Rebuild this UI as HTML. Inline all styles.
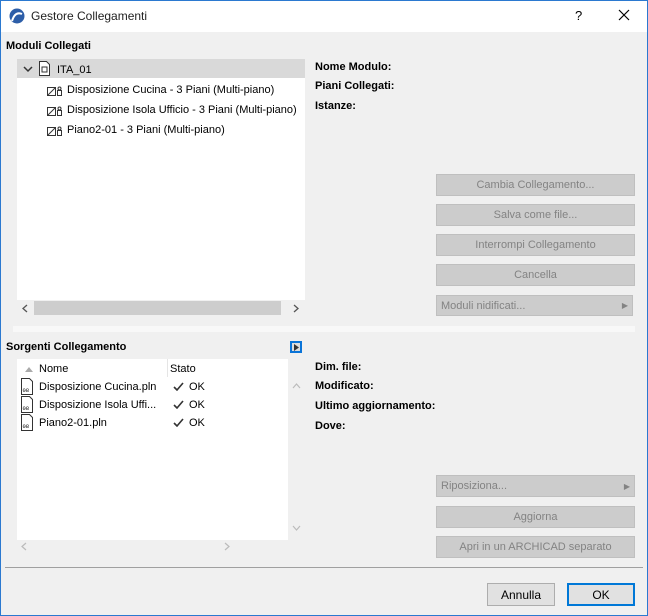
<!DOCTYPE html>
<html><head><meta charset="utf-8"><style>
*{box-sizing:border-box;margin:0;padding:0}
body{width:648px;height:616px;overflow:hidden;background:#f0f0f0;font-family:"Liberation Sans",sans-serif;font-size:11px;color:#000;position:relative}
.a{position:absolute;white-space:nowrap}
.b{font-weight:bold}
.btn{position:absolute;background:#cccccc;border:1px solid #bfbfbf;color:#838383;text-align:center;line-height:21px;height:22px;left:436px;width:199px}
.lbl{left:315px}
</style></head><body>
<div class="a" style="left:0;top:0;width:648px;height:32px;background:#fff"></div>
<div class="a" style="left:0;top:0;width:1px;height:616px;background:#2b79d0"></div>
<div class="a" style="right:0;top:0;width:1px;height:616px;background:#2b79d0"></div>
<div class="a" style="left:0;bottom:0;width:648px;height:1px;background:#2b79d0"></div>
<div class="a" style="left:0;top:0;width:648px;height:1px;background:#2b79d0"></div>
<svg class="a" style="left:9px;top:8px" width="16" height="16"><circle cx="8" cy="8" r="7.5" fill="#2d5ea8"/><path d="M3 13 Q6 3 13 6" stroke="#fff" stroke-width="2" fill="none"/></svg>
<div class="a" style="left:31px;top:9px;font-size:12px;color:#222">Gestore Collegamenti</div>
<div class="a" style="left:575px;top:8px;font-size:13px">?</div>
<svg class="a" style="left:618px;top:9px" width="12" height="12"><path d="M1 1L11 11M11 1L1 11" stroke="#000" stroke-width="1.2"/></svg>

<div class="a b" style="left:6px;top:40px">Moduli Collegati</div>
<div class="a" style="left:17px;top:59px;width:288px;height:257px;background:#fff"></div>
<div class="a" style="left:17px;top:59px;width:288px;height:19px;background:#d9d9d9"></div>
<svg class="a" style="left:23px;top:66px" width="10" height="7"><path d="M1 1L5 5L9 1" stroke="#333" stroke-width="1.5" fill="none"/></svg>
<svg class="a" style="left:38px;top:61px" width="13" height="15"><path d="M1.5 .5h7l3 3v11h-10z" fill="#fff" stroke="#333"/><rect x="4" y="6" width="5" height="5" fill="none" stroke="#333"/></svg>
<div class="a" style="left:57px;top:64px">ITA_01</div>
<svg class="a" style="left:47px;top:86px" width="15" height="10"><rect x=".5" y="1.5" width="8" height="8" fill="none" stroke="#333"/><path d="M1 9L8 2" stroke="#333"/><rect x="10.5" y="4.5" width="4" height="5" fill="none" stroke="#333"/><circle cx="12.5" cy="2.5" r="1.5" fill="none" stroke="#333"/></svg>
<svg class="a" style="left:47px;top:106px" width="15" height="10"><rect x=".5" y="1.5" width="8" height="8" fill="none" stroke="#333"/><path d="M1 9L8 2" stroke="#333"/><rect x="10.5" y="4.5" width="4" height="5" fill="none" stroke="#333"/><circle cx="12.5" cy="2.5" r="1.5" fill="none" stroke="#333"/></svg>
<svg class="a" style="left:47px;top:126px" width="15" height="10"><rect x=".5" y="1.5" width="8" height="8" fill="none" stroke="#333"/><path d="M1 9L8 2" stroke="#333"/><rect x="10.5" y="4.5" width="4" height="5" fill="none" stroke="#333"/><circle cx="12.5" cy="2.5" r="1.5" fill="none" stroke="#333"/></svg>
<div class="a" style="left:67px;top:84px">Disposizione Cucina - 3 Piani (Multi-piano)</div>
<div class="a" style="left:67px;top:104px;width:238px;overflow:hidden">Disposizione Isola Ufficio - 3 Piani (Multi-piano)</div>
<div class="a" style="left:67px;top:124px">Piano2-01 - 3 Piani (Multi-piano)</div>
<div class="a" style="left:17px;top:300px;width:288px;height:16px;background:#f0f0f0"></div>
<div class="a" style="left:34px;top:301px;width:247px;height:14px;background:#cdcdcd"></div>
<svg class="a" style="left:22px;top:304px" width="6" height="9"><path d="M5 1L1 4.5L5 8" stroke="#555" stroke-width="1.3" fill="none"/></svg>
<svg class="a" style="left:293px;top:304px" width="6" height="9"><path d="M1 1L5 4.5L1 8" stroke="#555" stroke-width="1.3" fill="none"/></svg>

<div class="a lbl b" style="top:61px">Nome Modulo:</div>
<div class="a lbl b" style="top:80px">Piani Collegati:</div>
<div class="a lbl b" style="top:100px">Istanze:</div>
<div class="btn" style="top:174px">Cambia Collegamento...</div>
<div class="btn" style="top:204px">Salva come file...</div>
<div class="btn" style="top:234px">Interrompi Collegamento</div>
<div class="btn" style="top:264px">Cancella</div>
<div class="btn" style="top:295px;height:21px;line-height:20px;width:197px;text-align:left;padding-left:4px">Moduli nidificati...<span style="position:absolute;right:4px;font-size:8px">▶</span></div>

<div class="a" style="left:13px;top:326px;width:622px;height:6px;background:#f8f8f8"></div>

<div class="a b" style="left:6px;top:341px">Sorgenti Collegamento</div>
<div class="a" style="left:290px;top:341px;width:12px;height:12px;border:2px solid #0a74d8;background:#ddd"></div>
<svg class="a" style="left:294px;top:344px" width="5" height="7"><path d="M0 0L5 3.5L0 7z" fill="#333"/></svg>
<div class="a" style="left:17px;top:359px;width:271px;height:181px;background:#fff"></div>
<div class="a" style="left:167px;top:359px;width:1px;height:18px;background:#e5e5e5"></div>
<svg class="a" style="left:25px;top:367px" width="8" height="5"><path d="M0 5L4 0L8 5z" fill="#aaa"/></svg>
<div class="a" style="left:39px;top:363px">Nome</div>
<div class="a" style="left:170px;top:363px">Stato</div>
<svg class="a" style="left:20px;top:378px" width="14" height="17"><path d="M1.5 .5h8l3 3v13h-11z" fill="#fff" stroke="#333"/><text x="2.5" y="14" font-size="5.5" font-family="Liberation Mono">08</text></svg>
<svg class="a" style="left:20px;top:396px" width="14" height="17"><path d="M1.5 .5h8l3 3v13h-11z" fill="#fff" stroke="#333"/><text x="2.5" y="14" font-size="5.5" font-family="Liberation Mono">08</text></svg>
<svg class="a" style="left:20px;top:414px" width="14" height="17"><path d="M1.5 .5h8l3 3v13h-11z" fill="#fff" stroke="#333"/><text x="2.5" y="14" font-size="5.5" font-family="Liberation Mono">08</text></svg>
<div class="a" style="left:39px;top:381px">Disposizione Cucina.pln</div>
<div class="a" style="left:39px;top:399px">Disposizione Isola Uffi...</div>
<div class="a" style="left:39px;top:417px">Piano2-01.pln</div>
<svg class="a" style="left:173px;top:382px" width="11" height="9"><path d="M1 5L4 8L10 1" stroke="#333" stroke-width="1.6" fill="none"/></svg>
<svg class="a" style="left:173px;top:400px" width="11" height="9"><path d="M1 5L4 8L10 1" stroke="#333" stroke-width="1.6" fill="none"/></svg>
<svg class="a" style="left:173px;top:418px" width="11" height="9"><path d="M1 5L4 8L10 1" stroke="#333" stroke-width="1.6" fill="none"/></svg>
<div class="a" style="left:189px;top:381px">OK</div>
<div class="a" style="left:189px;top:399px">OK</div>
<div class="a" style="left:189px;top:417px">OK</div>
<svg class="a" style="left:292px;top:383px" width="9" height="6"><path d="M1 5L4.5 1L8 5" stroke="#bbb" stroke-width="1.2" fill="none"/></svg>
<svg class="a" style="left:292px;top:525px" width="9" height="6"><path d="M1 1L4.5 5L8 1" stroke="#bbb" stroke-width="1.2" fill="none"/></svg>
<svg class="a" style="left:21px;top:542px" width="6" height="9"><path d="M5 1L1 4.5L5 8" stroke="#bbb" stroke-width="1.2" fill="none"/></svg>
<svg class="a" style="left:224px;top:542px" width="6" height="9"><path d="M1 1L5 4.5L1 8" stroke="#bbb" stroke-width="1.2" fill="none"/></svg>

<div class="a lbl b" style="top:361px">Dim. file:</div>
<div class="a lbl b" style="top:380px">Modificato:</div>
<div class="a lbl b" style="top:400px">Ultimo aggiornamento:</div>
<div class="a lbl b" style="top:420px">Dove:</div>
<div class="btn" style="top:475px;width:199px;text-align:left;padding-left:4px">Riposiziona...<span style="position:absolute;right:4px;font-size:8px">▶</span></div>
<div class="btn" style="top:506px">Aggiorna</div>
<div class="btn" style="top:536px">Apri in un ARCHICAD separato</div>

<div class="a" style="left:5px;top:567px;width:638px;height:1px;background:#a0a0a0"></div>
<div class="a" style="left:487px;top:583px;width:68px;height:23px;background:#e1e1e1;border:1px solid #adadad;text-align:center;line-height:22px;font-size:12px">Annulla</div>
<div class="a" style="left:567px;top:583px;width:68px;height:23px;background:#e1e1e1;border:2px solid #0078d7;text-align:center;line-height:20px;font-size:12px">OK</div>
</body></html>
